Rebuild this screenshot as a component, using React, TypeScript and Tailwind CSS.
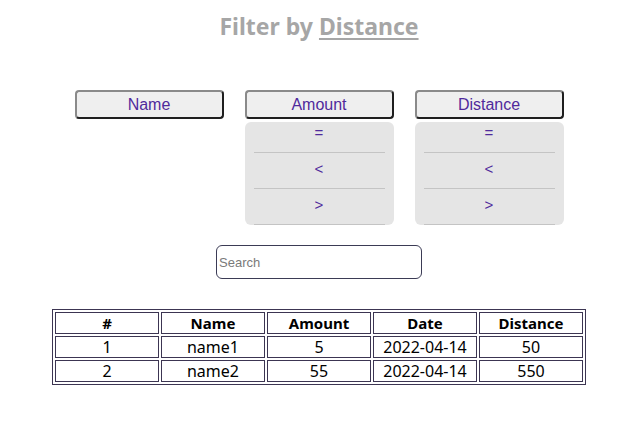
import React from "react";

const rows = [
  { id: 1, name: "name1", amount: 5, date: "2022-04-14", distance: 50 },
  { id: 2, name: "name2", amount: 55, date: "2022-04-14", distance: 550 },
];

function FilterButton({ label }: { label: string }) {
  return (
    <button className="w-[149px] h-[29px] rounded-[4px] border-2 border-t-[#8a8a8a] border-l-[#8a8a8a] border-r-[#1f1f1f] border-b-[#1f1f1f] bg-[#efefef] text-[16px] text-[#4f2a9c] font-['Liberation_Sans',Arial,sans-serif]">
      {label}
    </button>
  );
}

function Dropdown() {
  return (
    <div className="mt-[3px] w-[149px] h-[103px] overflow-hidden rounded-[6px] bg-[#e5e5e5]">
      <div className="-mt-[5px] px-[9px]">
        {["=", "<", ">"].map((op) => (
          <div
            key={op}
            className="h-[36px] flex items-center justify-center border-b border-[#c4c4c4] text-[15px] text-[#4f2a9c] font-['Liberation_Sans',Arial,sans-serif] pb-[3px]"
          >
            {op}
          </div>
        ))}
      </div>
    </div>
  );
}

export default function App() {
  const cell = "border border-[#3c3552] h-[22px] p-0 leading-[20px]";
  return (
    <div className="w-full min-h-screen bg-white pl-[7px] font-['Noto_Sans',sans-serif]">
      <h1 className="pt-[10px] text-center text-[23px] leading-[32px] font-bold text-[#a6a6a6]">
        Filter by <span className="underline underline-offset-[3px]">Distance</span>
      </h1>

      <div className="mt-[48px] flex justify-center items-start gap-[21px]">
        <div className="flex flex-col">
          <FilterButton label="Name" />
        </div>
        <div className="flex flex-col">
          <FilterButton label="Amount" />
          <Dropdown />
        </div>
        <div className="flex flex-col">
          <FilterButton label="Distance" />
          <Dropdown />
        </div>
      </div>

      <div className="mt-[20px] flex justify-center">
        <input
          type="text"
          placeholder="Search"
          className="w-[206px] h-[34px] rounded-[6px] border border-[#3b3b55] px-[2px] text-[13px] font-['Liberation_Sans',Arial,sans-serif] placeholder:text-[#7a7a7a] outline-none"
        />
      </div>

      <div className="mt-[30px] flex justify-center">
        <table className="w-[534px] table-fixed border border-[#3c3552] border-separate border-spacing-[2px] text-[16px] text-black text-center">
          <thead>
            <tr>
              {["#", "Name", "Amount", "Date", "Distance"].map((h) => (
                <th key={h} className={`${cell} text-[15px] font-bold`}>
                  {h}
                </th>
              ))}
            </tr>
          </thead>
          <tbody>
            {rows.map((r) => (
              <tr key={r.id}>
                <td className={cell}>{r.id}</td>
                <td className={cell}>{r.name}</td>
                <td className={cell}>{r.amount}</td>
                <td className={cell}>{r.date}</td>
                <td className={cell}>{r.distance}</td>
              </tr>
            ))}
          </tbody>
        </table>
      </div>
    </div>
  );
}
